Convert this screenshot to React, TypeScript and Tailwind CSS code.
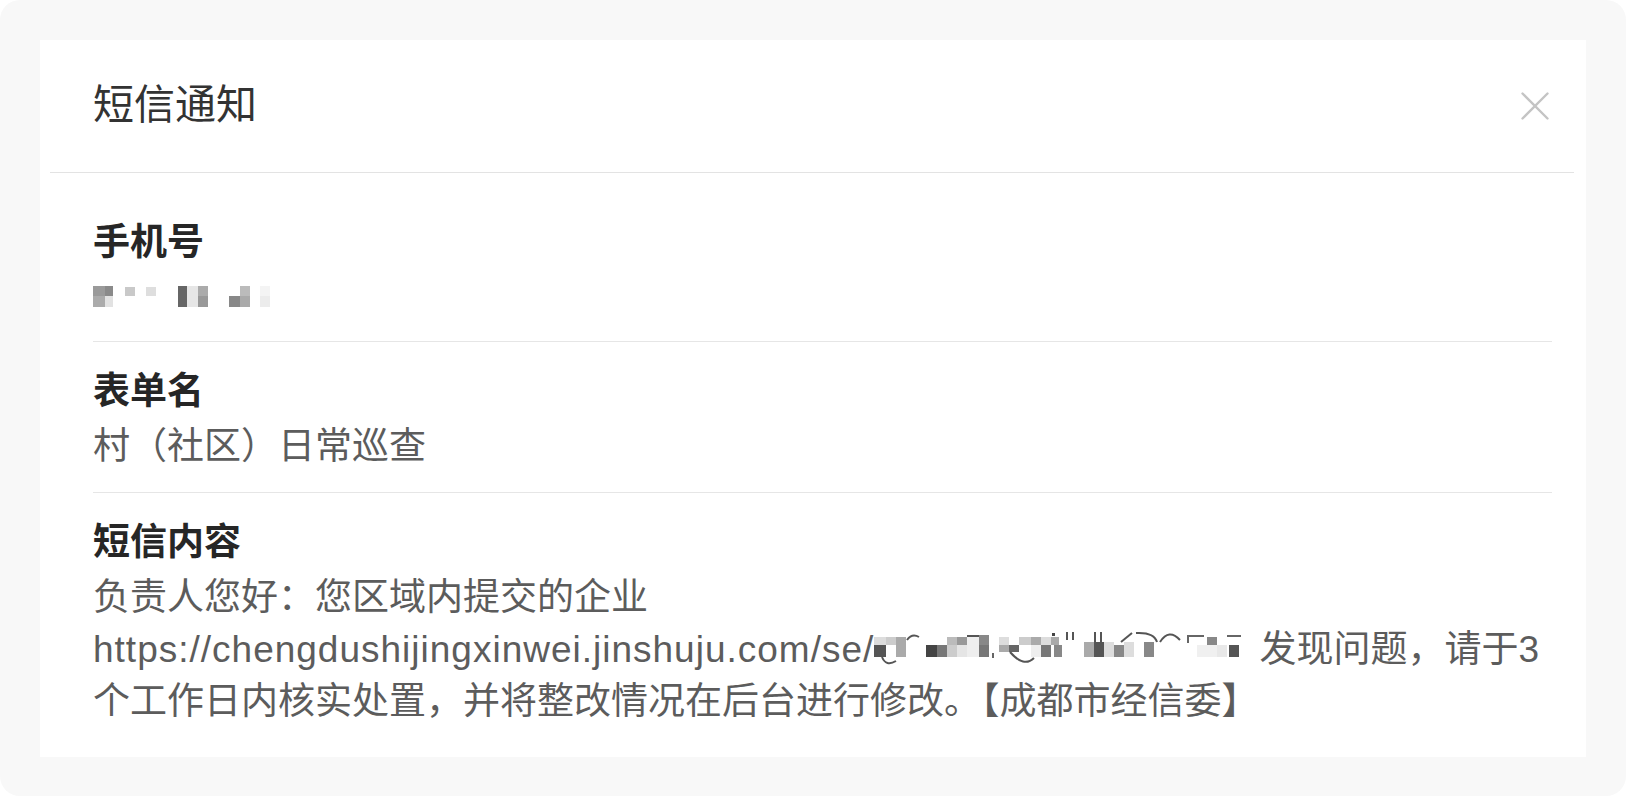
const font = 'font-["Liberation_Sans","Noto_Sans_CJK_SC",sans-serif]';

// pixel mosaic that hides the phone number
function PhoneMosaic() {
  const cells: [number, number, number, number, string][] = [
    [0, 1, 12, 10, '#9a9a9a'],
    [12, 1, 8, 10, '#8a8a8a'],
    [0, 11, 12, 11, '#ababab'],
    [12, 11, 8, 11, '#e2e2e2'],
    [32, 2, 10, 9, '#c9c9c9'],
    [53, 2, 10, 9, '#dedede'],
    [85, 1, 9, 21, '#666666'],
    [94, 1, 11, 21, '#e6e6e6'],
    [105, 1, 10, 10, '#ababab'],
    [105, 11, 10, 11, '#999999'],
    [136, 11, 11, 11, '#888888'],
    [147, 1, 10, 10, '#bbbbbb'],
    [147, 11, 10, 11, '#aaaaaa'],
    [167, 1, 10, 10, '#f4f4f4'],
    [167, 11, 10, 11, '#ececec'],
  ];
  return (
    <svg width="180" height="22" viewBox="0 0 180 22" className="blur-[0.4px]">
      {cells.map(([x, y, w, h, c], i) => (
        <rect key={i} x={x} y={y} width={w} height={h} fill={c} />
      ))}
    </svg>
  );
}

// pixel mosaic inside the form link
function LinkMosaic() {
  const cells: [number, number, number, number, string][] = [
    [0, 9, 12, 8, '#dddddd'],
    [0, 17, 12, 12, '#555555'],
    [12, 9, 10, 8, '#cccccc'],
    [22, 9, 10, 20, '#aaaaaa'],
    [52, 17, 11, 12, '#444444'],
    [63, 17, 10, 12, '#777777'],
    [73, 9, 10, 8, '#bbbbbb'],
    [73, 17, 10, 12, '#cccccc'],
    [83, 9, 10, 8, '#999999'],
    [83, 17, 10, 12, '#e5e5e5'],
    [93, 9, 12, 20, '#eeeeee'],
    [93, 7, 12, 2, '#555555'],
    [105, 7, 10, 10, '#888888'],
    [105, 17, 10, 12, '#777777'],
    [118, 25, 2, 5, '#666666'],
    [125, 9, 10, 8, '#dddddd'],
    [125, 17, 10, 7, '#aaaaaa'],
    [135, 17, 10, 7, '#666666'],
    [145, 9, 12, 8, '#cccccc'],
    [157, 9, 10, 8, '#aaaaaa'],
    [157, 17, 10, 12, '#eeeeee'],
    [167, 9, 10, 8, '#dddddd'],
    [167, 17, 10, 12, '#777777'],
    [177, 9, 8, 8, '#aaaaaa'],
    [178, 5, 3, 3, '#444444'],
    [180, 17, 8, 12, '#888888'],
    [192, 4, 2, 8, '#555555'],
    [198, 4, 2, 8, '#555555'],
    [210, 14, 10, 15, '#aaaaaa'],
    [220, 4, 2, 10, '#555555'],
    [226, 4, 2, 10, '#555555'],
    [220, 14, 10, 15, '#555555'],
    [230, 14, 10, 15, '#dddddd'],
    [240, 17, 10, 12, '#888888'],
    [250, 14, 10, 15, '#dddddd'],
    [270, 14, 10, 15, '#888888'],
    [313, 7, 17, 2, '#666666'],
    [313, 7, 2, 8, '#666666'],
    [333, 9, 10, 8, '#888888'],
    [323, 17, 20, 12, '#f0f0f0'],
    [343, 17, 10, 12, '#e8e8e8'],
    [355, 17, 10, 12, '#555555'],
    [353, 7, 14, 2, '#666666'],
  ];
  return (
    <svg
      width="375"
      height="40"
      viewBox="0 0 375 40"
      className="inline-block align-[-6px] blur-[0.4px]"
    >
      {cells.map(([x, y, w, h, c], i) => (
        <rect key={i} x={x} y={y} width={w} height={h} fill={c} />
      ))}
      <path d="M8 29 Q12 39 22 33" stroke="#555" strokeWidth="2" fill="none" />
      <path d="M33 12 Q38 5 45 9" stroke="#555" strokeWidth="2" fill="none" />
      <path d="M136 24 Q150 40 160 30" stroke="#555" strokeWidth="2" fill="none" />
      <path d="M247 14 L258 5" stroke="#555" strokeWidth="2" fill="none" />
      <path d="M262 5 Q280 4 283 14" stroke="#555" strokeWidth="2" fill="none" />
      <path d="M286 14 Q295 0 306 12" stroke="#555" strokeWidth="2" fill="none" />
    </svg>
  );
}

function CloseIcon() {
  return (
    <svg width="28" height="28" viewBox="0 0 28 28" className="text-[#c4c4c4]">
      <path d="M1.5 1.5 L26.5 26.5 M26.5 1.5 L1.5 26.5" stroke="currentColor" strokeWidth="2.4" strokeLinecap="round" />
    </svg>
  );
}

function Section({ label, children, last }: { label: string; children: React.ReactNode; last?: boolean }) {
  return (
    <div className={`pt-[25px] pb-[19px] ${last ? '' : 'border-b border-[#e6e6e6]'}`}>
      <div className="text-[37px] leading-[50px] font-semibold text-[#262626]">{label}</div>
      <div className="mt-1 text-[37px] leading-[52px] text-[#5c5c5c]">{children}</div>
    </div>
  );
}

export default function App() {
  return (
    <div className={`min-h-screen bg-white ${font}`}>
      <div className="h-[796px] rounded-[20px] bg-[#f8f8f8] px-10 pt-10">
        <div className="h-[717px] bg-white">
          {/* Header */}
          <div className="flex h-[132px] items-center justify-between pl-[53px] pr-[37px]">
            <h2 className="text-[41px] font-normal text-[#333333]">短信通知</h2>
            <CloseIcon />
          </div>
          <div className="ml-[10px] mr-[12px] border-b border-[#e3e3e3]" />

          {/* Body */}
          <div className="pl-[53px] pr-[34px] pt-5">
            <Section label="手机号">
              <div className="-mt-[2px] flex h-[52px] items-center">
                <PhoneMosaic />
              </div>
            </Section>
            <Section label="表单名">村（社区）日常巡查</Section>
            <Section label="短信内容" last>
              <div className="whitespace-nowrap">负责人您好：您区域内提交的企业</div>
              <div className="whitespace-nowrap">
                <span className="tracking-[1px]">https://chengdushijingxinwei.jinshuju.com/se/</span>
                <LinkMosaic /> 发现问题，请于3
              </div>
              <div className="whitespace-nowrap">
                个工作日内核实处置，并将整改情况在后台进行修改。【成都市经信委】
              </div>
            </Section>
          </div>
        </div>
      </div>
    </div>
  );
}
